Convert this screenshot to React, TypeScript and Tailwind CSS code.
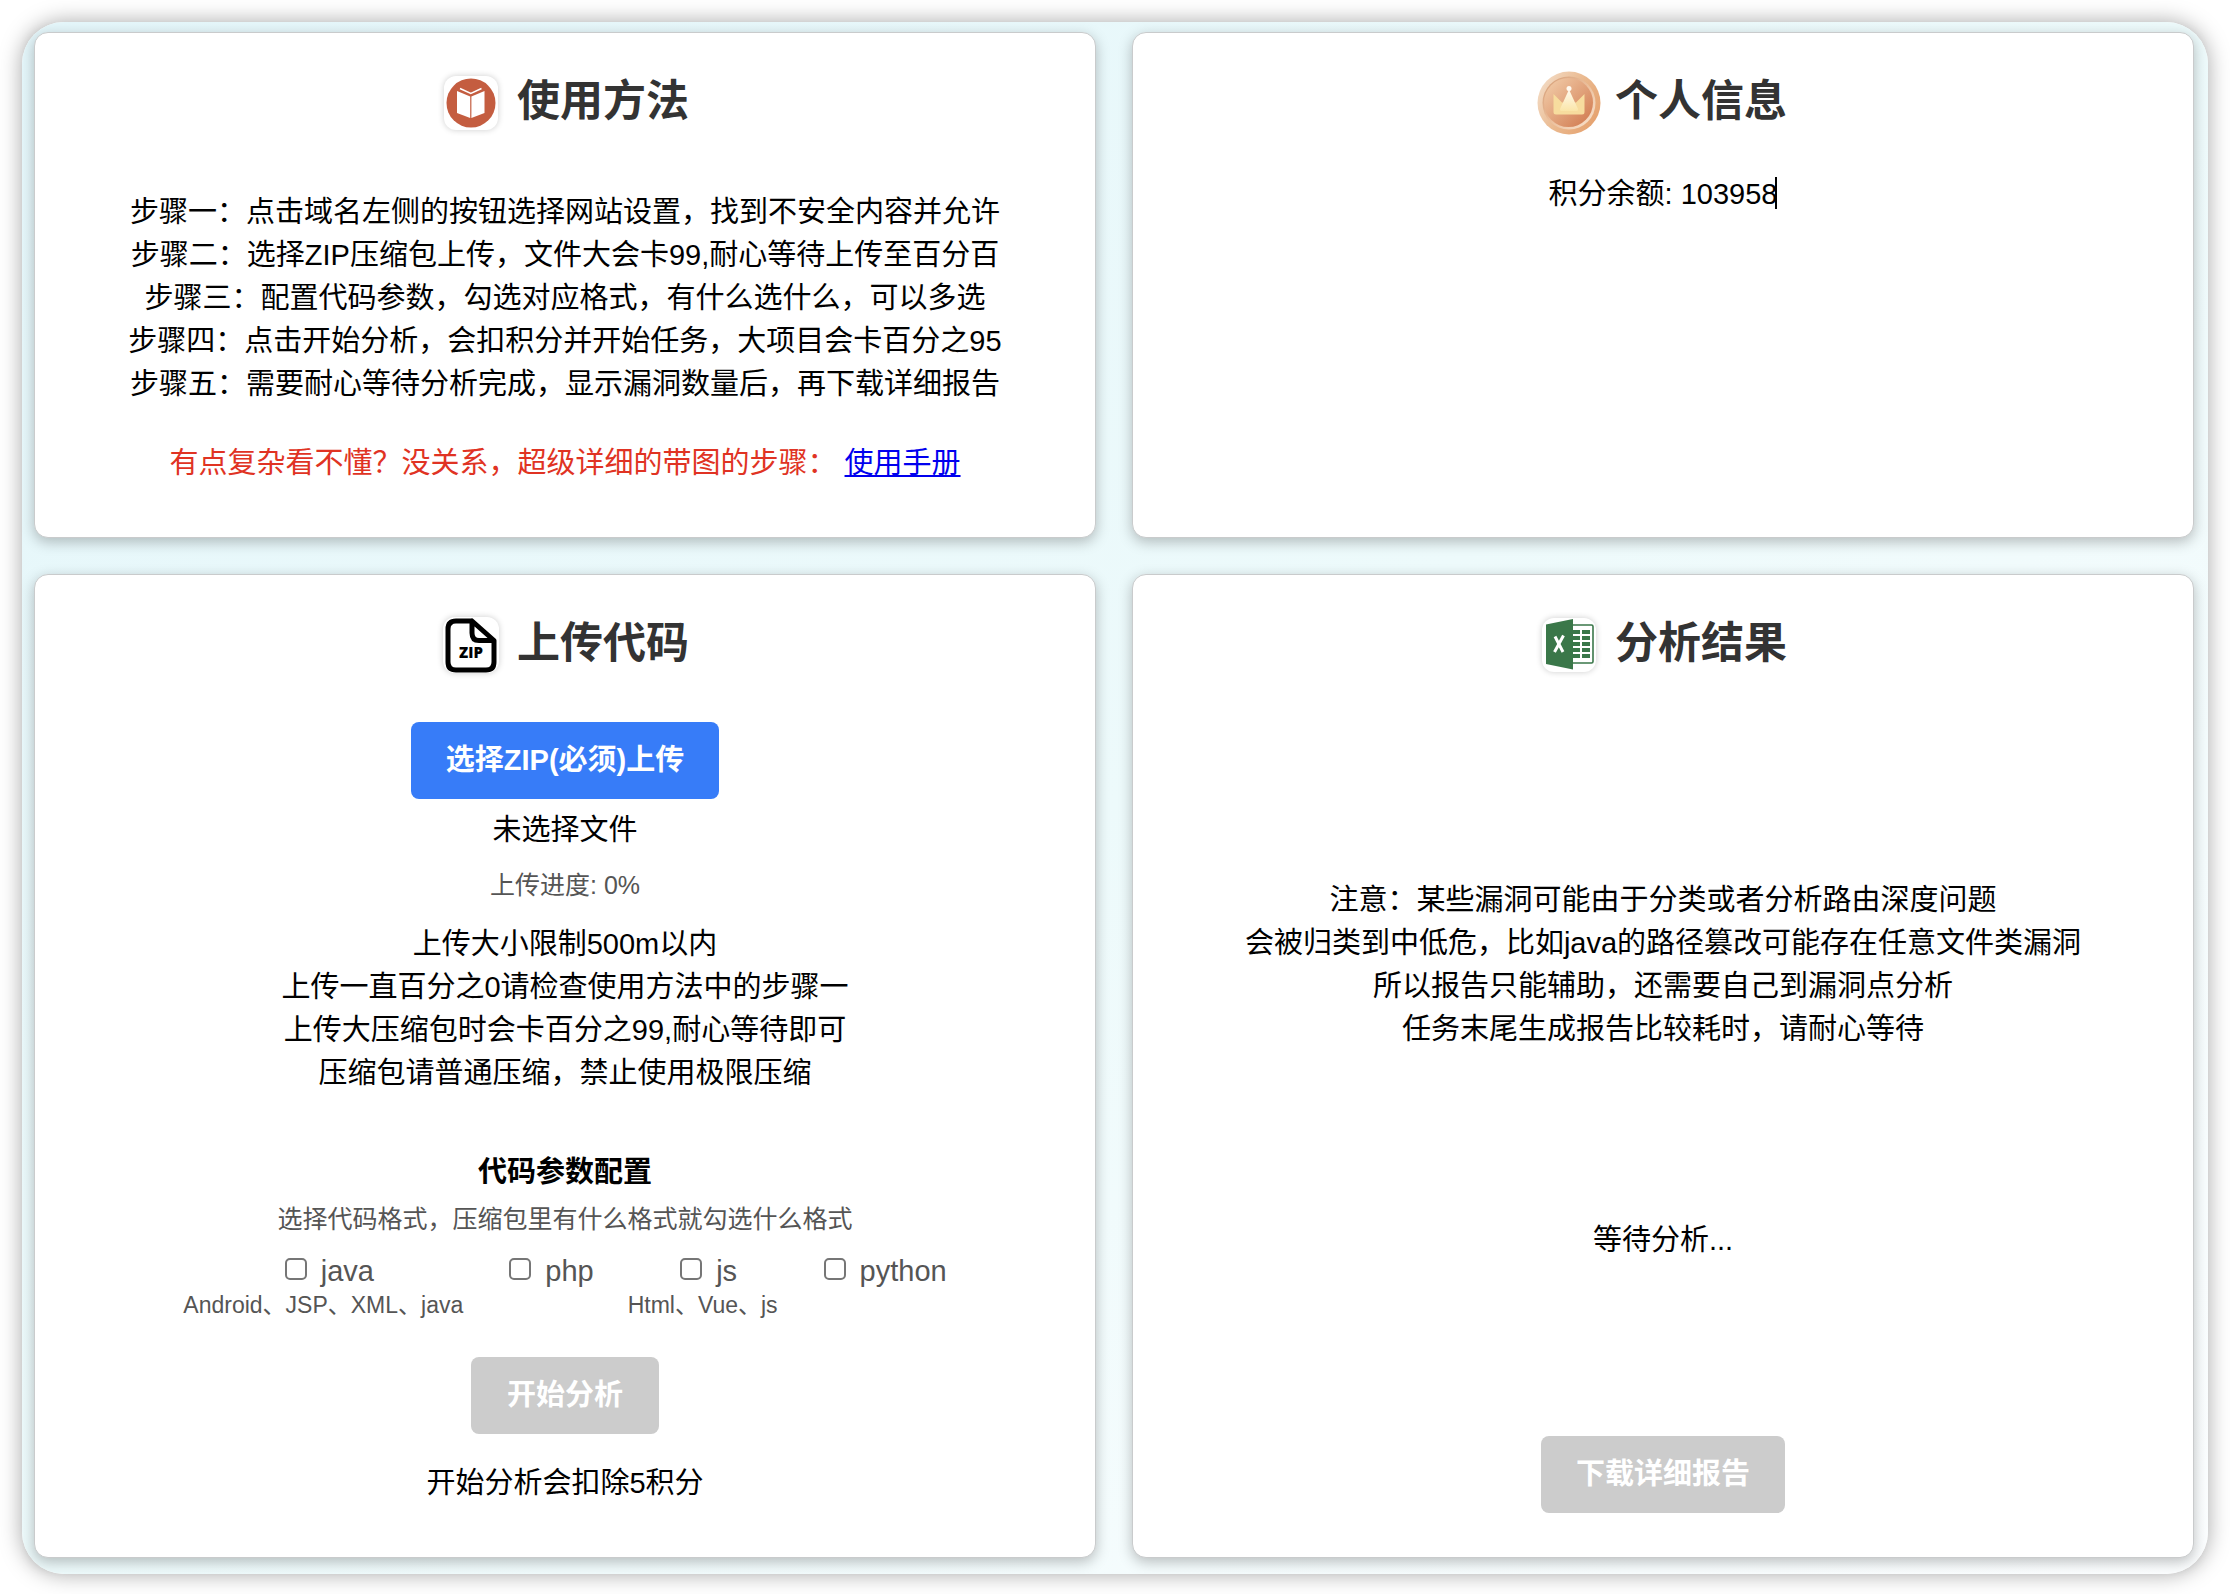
import { useState } from 'react';
import type { ReactNode } from 'react';

type CardProps = {
  icon: ReactNode;
  title: string;
  children: ReactNode;
};

const steps = [
  '步骤一：点击域名左侧的按钮选择网站设置，找到不安全内容并允许',
  '步骤二：选择ZIP压缩包上传，文件大会卡99,耐心等待上传至百分百',
  '步骤三：配置代码参数，勾选对应格式，有什么选什么，可以多选',
  '步骤四：点击开始分析，会扣积分并开始任务，大项目会卡百分之95',
  '步骤五：需要耐心等待分析完成，显示漏洞数量后，再下载详细报告',
];

const uploadTips = [
  '上传大小限制500m以内',
  '上传一直百分之0请检查使用方法中的步骤一',
  '上传大压缩包时会卡百分之99,耐心等待即可',
  '压缩包请普通压缩，禁止使用极限压缩',
];

const resultTips = [
  '注意：某些漏洞可能由于分类或者分析路由深度问题',
  '会被归类到中低危，比如java的路径篡改可能存在任意文件类漏洞',
  '所以报告只能辅助，还需要自己到漏洞点分析',
  '任务末尾生成报告比较耗时，请耐心等待',
];

const languages = [
  { id: 'java', hint: 'Android、JSP、XML、java' },
  { id: 'php', hint: '' },
  { id: 'js', hint: 'Html、Vue、js' },
  { id: 'python', hint: '' },
];

function BookIcon() {
  return (
    <svg viewBox="0 0 54 54" className="w-[54px] h-[54px] shrink-0 rounded-xl bg-white shadow-[0_0_6px_rgba(0,0,0,0.2)]">
      <circle cx="27" cy="27" r="24.5" fill="#c45d40" />
      <path d="M13 15 26.2 20.500V42L13 37Z" fill="#fff" />
      <path d="M40.500 15 27.400 20.500V42L40.500 37Z" fill="#fff" />
      <path d="M16 12.500 26.800 17.500 37.500 12.500" fill="none" stroke="#fff" strokeWidth="1.500" />
    </svg>
  );
}

function CrownIcon() {
  return (
    <svg viewBox="0 0 64 64" className="w-16 h-16 shrink-0">
      <defs>
        <linearGradient id="coinRim" x1="0" y1="0.2" x2="1" y2="0.8">
          <stop offset="0" stopColor="#f3dcc6" />
          <stop offset="0.5" stopColor="#eab98f" />
          <stop offset="1" stopColor="#e5a06c" />
        </linearGradient>
        <linearGradient id="coinEdge" x1="0" y1="0" x2="1" y2="1">
          <stop offset="0" stopColor="#d39b74" />
          <stop offset="0.5" stopColor="#ebbf9c" />
          <stop offset="1" stopColor="#fae6d2" />
        </linearGradient>
        <linearGradient id="coinFace" x1="0.1" y1="0.1" x2="0.9" y2="0.9">
          <stop offset="0" stopColor="#f0c8a4" />
          <stop offset="1" stopColor="#d37f55" />
        </linearGradient>
        <linearGradient id="crown" x1="0" y1="0" x2="0" y2="1">
          <stop offset="0" stopColor="#fffaf0" />
          <stop offset="1" stopColor="#fae5a8" />
        </linearGradient>
      </defs>
      <circle cx="32" cy="32" r="31.500" fill="url(#coinRim)" />
      <circle cx="32" cy="32" r="26.500" fill="url(#coinEdge)" />
      <circle cx="31.500" cy="31.500" r="24.500" fill="url(#coinFace)" />
      <path d="M16.500 23 25 31.500 39 31.500 47.500 23V41Q47.500 43.500 45 43.500H19Q16.500 43.500 16.500 41Z" fill="#f7dc9e" />
      <path d="M32 18.500 41 38Q41.500 40 39.500 40H24.500Q22.500 40 23 38Z" fill="url(#crown)" />
      <circle cx="32" cy="17.500" r="2.500" fill="#fffaf0" />
    </svg>
  );
}

function ZipIcon() {
  return (
    <svg viewBox="0 0 56 56" className="w-14 h-14 shrink-0 rounded-xl bg-white shadow-[0_0_6px_rgba(0,0,0,0.2)]">
      <path
        d="M28.500 4H13Q5 4 5 12V45Q5 53 13 53H43Q51 53 51 45V23.500L29 4V16Q29 23.500 36 23.500H51"
        fill="none"
        stroke="#000"
        strokeWidth="5"
        strokeLinejoin="round"
      />
      <text x="28" y="41" textAnchor="middle" className="font-[Open_Sans] text-[15px] font-extrabold">
        ZIP
      </text>
    </svg>
  );
}

function ExcelIcon() {
  return (
    <svg viewBox="0 0 54 54" className="w-[54px] h-[54px] shrink-0 rounded-xl bg-white shadow-[0_0_6px_rgba(0,0,0,0.2)]">
      <rect x="28" y="7" width="23" height="38" rx="1.500" fill="#fff" stroke="#3a7749" strokeWidth="1.600" />
      <path
        d="M31 12h7v4h-7zM40 12h8v4h-8zM31 18h7v4h-7zM40 18h8v4h-8zM31 24h7v4h-7zM40 24h8v4h-8zM31 30h7v4h-7zM40 30h8v4h-8zM31 36h7v4h-7zM40 36h8v4h-8z"
        fill="#3a7749"
      />
      <path d="M4 6.500 31 1V51.500L4 46Z" fill="#3a7749" />
      <path d="M13 18.500 21 34M21.500 17.500 12.500 34" fill="none" stroke="#fff" strokeWidth="3" />
    </svg>
  );
}

function Card({ icon, title, children }: CardProps) {
  return (
    <section className="flex flex-col items-center rounded-[14px] border border-[#c9cbcc] bg-white px-6 pt-9 pb-11 text-center shadow-[0_4px_14px_rgba(0,0,0,0.25)]">
      <div className="flex h-16 items-center gap-4">
        <div className="flex w-[60px] justify-center pt-1">{icon}</div>
        <h2 className="text-[43px] leading-[64px] font-bold text-[#333]">{title}</h2>
      </div>
      {children}
    </section>
  );
}

function Lines({ items }: { items: string[] }) {
  return (
    <>
      {items.map((item) => (
        <p key={item}>{item}</p>
      ))}
    </>
  );
}

export default function App() {
  const [selected, setSelected] = useState<string[]>([]);

  const toggle = (id: string) => {
    setSelected(prev => (prev.includes(id) ? prev.filter(item => item !== id) : [...prev, id]));
  };

  return (
    <div className="min-h-screen bg-white p-[22px] font-['Liberation_Sans','Noto_Sans_CJK_SC',sans-serif] text-[29px] leading-[43px] text-black">
      <main className="grid grid-cols-2 gap-9 rounded-[42px] bg-linear-to-br from-[#e4f6fa] via-[#edfafb] to-[#fcfeff] pt-[10px] pr-[14px] pb-4 pl-3 shadow-[0_0_22px_rgba(0,0,0,0.35)]">
        {/* Usage */}
        <Card icon={<BookIcon />} title="使用方法">
          <div className="mt-[58px]">
            <Lines items={steps} />
          </div>
          <p className="mt-9 mb-2 text-[#e03323]">
            有点复杂看不懂？没关系，超级详细的带图的步骤：{' '}
            <a href="#manual" className="text-[#0000ee] underline">使用手册</a>
          </p>
        </Card>

        {/* Profile */}
        <Card icon={<CrownIcon />} title="个人信息">
          <p className="relative mt-10">
            积分余额: 103958
            <span className="absolute top-1 right-0 h-8 w-[2px] bg-black" />
          </p>
        </Card>

        {/* Upload */}
        <Card icon={<ZipIcon />} title="上传代码">
          <button className="mt-[47px] h-[77px] rounded-lg bg-[#377cf8] px-[35px] font-bold text-white">
            选择ZIP(必须)上传
          </button>
          <p className="mt-[10px]">未选择文件</p>
          <p className="mt-3 text-[25px] text-[#555]">上传进度: 0%</p>
          <div className="mt-4">
            <Lines items={uploadTips} />
          </div>
          <h3 className="mt-14 font-bold">代码参数配置</h3>
          <p className="mt-1 text-[25px] text-[#555]">选择代码格式，压缩包里有什么格式就勾选什么格式</p>
          <div className="mt-3 flex justify-center gap-[34px] text-[#555]">
            {languages.map(({ id, hint }) => (
              <div key={id}>
                <label className="flex items-center justify-center gap-[14px] leading-9">
                  <input
                    type="checkbox"
                    checked={selected.includes(id)}
                    onChange={() => toggle(id)}
                    className="mb-1 ml-3 size-[22px] appearance-none rounded-[5px] border-2 border-[#767676] bg-white checked:bg-[#377cf8]"
                  />
                  {id}
                </label>
                {hint && <p className="text-[23px] leading-8">{hint}</p>}
              </div>
            ))}
          </div>
          <button disabled className="mt-9 h-[77px] rounded-lg bg-[#ccc] px-9 font-bold text-white">
            开始分析
          </button>
          <p className="mt-7 mb-2">开始分析会扣除5积分</p>
        </Card>

        {/* Result */}
        <Card icon={<ExcelIcon />} title="分析结果">
          <div className="mt-[204px]">
            <Lines items={resultTips} />
          </div>
          <p className="mt-[168px]">等待分析...</p>
          <button disabled className="mt-auto h-[77px] rounded-lg bg-[#ccc] px-[35px] font-bold text-white">
            下载详细报告
          </button>
        </Card>
      </main>
    </div>
  );
}
